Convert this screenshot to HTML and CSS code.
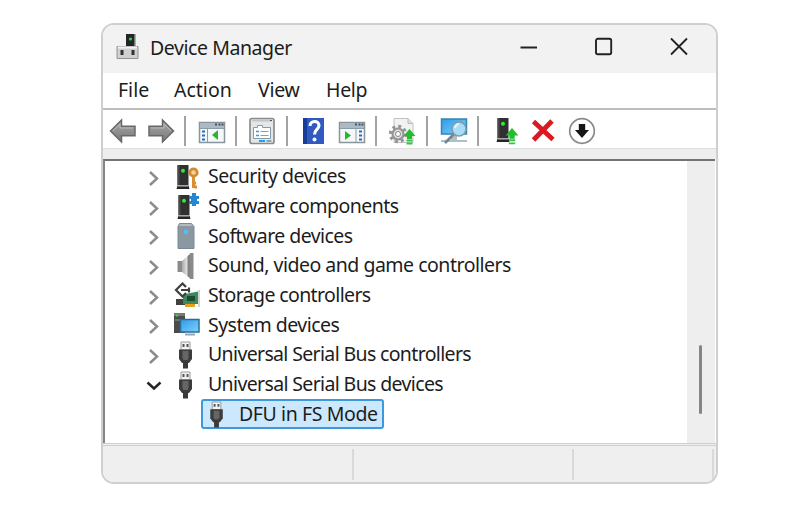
FILE: index.html
```html
<!DOCTYPE html>
<html lang="en">
<head>
<meta charset="utf-8">
<title>Device Manager</title>
<link rel="stylesheet" href="styles.css">
</head>
<body>
<svg class="defs" width="0" height="0">
  <defs>
    <linearGradient id="steel" x1="0" y1="0" x2="0" y2="1"><stop offset="0" stop-color="#a9a9a9"/><stop offset="1" stop-color="#777"/></linearGradient>
    <linearGradient id="screen" x1="0" y1="0" x2="1" y2="1"><stop offset="0" stop-color="#2f9be8"/><stop offset="1" stop-color="#7fd0fb"/></linearGradient>
    <linearGradient id="cone" x1="0" y1="0" x2="1" y2="0"><stop offset="0" stop-color="#aaa"/><stop offset=".5" stop-color="#ddd"/><stop offset=".75" stop-color="#777"/><stop offset="1" stop-color="#999"/></linearGradient>
    <symbol id="chevron" viewBox="0 0 16 18"><path d="M4 3 11 9.500l-7 6.500" fill="none" stroke="#8c8c8c" stroke-width="2.500"/></symbol>
    <symbol id="chevron-down" viewBox="0 0 16 18"><path d="M1.500 5.500 8 11.500 14.500 5.500" fill="none" stroke="#262626" stroke-width="2.500"/></symbol>
    <symbol id="tower" viewBox="0 0 14 25"><path d="M1.500 .5h11v20h-11z" fill="#303030"/><path d="M1.500 .5h2v20h-2z" fill="#4b4b4b"/><path d="M1.500 21h11l1 3.500H.5z" fill="#242424"/><path d="M2 21.500h10" stroke="#bbb"/><circle cx="7" cy="6.300" r="2" fill="#2bed38"/></symbol>
    <symbol id="usb" viewBox="0 0 28 28"><path d="M9 1h9v8H9z" fill="#f2f2f2" stroke="#9a9a9a"/><path d="M10.500 3h2v3h-2zm4 0h2v3h-2z" fill="#555"/><path d="M7 8.500h13V18l-3 4h-7l-3-4z" fill="#3c3c3c"/><path d="M10.500 10h6v7l-1 2h-4l-1-2z" fill="#666"/><path d="M11 21h5v6.500h-5z" fill="#393939"/></symbol>
    <symbol id="arrow" viewBox="0 0 28 28"><path d="M1.500 14 12.500 3v6.200H26v9.600H12.500V25z" fill="url(#steel)" stroke="#686868" stroke-width="1.500"/><path d="M4 14 11 7v4h13" fill="none" stroke="#b8b8b8"/></symbol>
    <symbol id="up" viewBox="0 0 12 16"><path d="M6 0l6 7H8.500v3h-5V7H0z" fill="#20bd2d"/><path d="M3 11.500h6m-6 3h6" stroke="#35c741" stroke-width="1.800"/></symbol>
  </defs>
</svg>
<main class="window">
  <header class="titlebar">
    <svg class="app-icon" viewBox="0 0 24 27"><path d="M10 0h8.500v13H10z" fill="#252525"/><path d="M18.500 0h1v13h-1z" fill="#666"/><circle cx="14.500" cy="5" r="1.600" fill="#28db35"/><path d="M1 12.500h21v12H1z" fill="#d0d0d0" stroke="#929292"/><path d="M2 13.500h19" stroke="#f4f4f4" stroke-width="2"/><path d="M4.500 16h3v5h-3zm11 0h3v5h-3z" fill="#333"/></svg>
    <h1>Device Manager</h1>
    <div class="controls">
      <svg viewBox="0 0 20 20"><path d="M1.500 10.500h16.500" stroke="#222" stroke-width="1.800"/></svg>
      <svg viewBox="0 0 20 20"><rect x="2" y="1.800" width="15.200" height="15.400" rx="1.800" fill="none" stroke="#222" stroke-width="1.900"/></svg>
      <svg viewBox="0 0 20 20"><path d="M2 1.500l16 16M18 1.500 2 17.500" stroke="#222" stroke-width="1.800"/></svg>
    </div>
  </header>
  <nav class="menu"><span class="file">File</span><span class="action">Action</span><span class="view">View</span><span class="help">Help</span></nav>
  <div class="toolbar">
    <svg class="tool back" viewBox="0 0 28 28"><use href="#arrow"/></svg>
    <svg class="tool forward" viewBox="0 0 28 28"><use href="#arrow" transform="translate(28 0) scale(-1 1)"/></svg>
    <i class="sep s1"></i>
    <svg class="tool tree-view" viewBox="0 0 28 28"><path d="M1.500 5.500h25v20h-25z" fill="#f5f7f8" stroke="#8a949b" stroke-width="1.500"/><path d="M2 6h24v5H2z" fill="#abb9c4"/><path d="M17 7.500h2m1.500 0h2m1 0h2" stroke="#40566b" stroke-width="2"/><path d="M2 11.500h24M9.500 12v13" stroke="#899da9"/><path d="M4 14.500h3m-3 4h3m-3 4h3" stroke="#286bc0" stroke-width="2"/><path d="M20 13v10l-6-5z" fill="#25b82c"/></svg>
    <i class="sep s2"></i>
    <svg class="tool properties" viewBox="0 0 28 28"><rect x="2" y="1.500" width="24" height="25" rx="2" fill="#e3e7ea" stroke="#8c8c8c" stroke-width="1.700"/><path d="M4 3.500h20" stroke="#bdc6cc" stroke-width="2"/><path d="M5.500 10.500h4v-2h5v2h8v11h-17z" fill="#fff" stroke="#849ca9"/><path d="M8 14.500h3m-3 4h3" stroke="#4594cb" stroke-width="1.600"/><path d="M12.500 14.500h8m-8 4h8" stroke="#8e9da5"/><path d="M11 24h6" stroke="#249df0" stroke-width="2"/><path d="M18.500 24h5" stroke="#8ba5b3" stroke-width="2"/><path d="M22 3.500h2" stroke="#555"/></svg>
    <i class="sep s3"></i>
    <svg class="tool help-icon" viewBox="0 0 28 28"><path d="M3 1h21v26H3z" fill="#3159bf"/><path d="M3 1h4v26H3z" fill="#173c99"/><path d="M10 9c0-6 9-6 9-.5 0 4-4.500 4-4.500 9" fill="none" stroke="#fff" stroke-width="3.100"/><circle cx="14.500" cy="22.500" r="2" fill="#fff"/></svg>
    <svg class="tool action-view" viewBox="0 0 28 28"><path d="M1.500 5.500h25v20h-25z" fill="#f5f7f8" stroke="#8a949b" stroke-width="1.500"/><path d="M2 6h24v5H2z" fill="#abb9c4"/><path d="M17 7.500h2m1.500 0h2m1 0h2" stroke="#40566b" stroke-width="2"/><path d="M2 11.500h24M18 12v13" stroke="#899da9"/><path d="M21 14.500h3m-3 4h3m-3 4h3" stroke="#286bc0" stroke-width="2"/><path d="M7 14v9l6-4.500z" fill="#25b82c"/></svg>
    <i class="sep s4"></i>
    <svg class="tool update" viewBox="0 0 28 28"><path d="M6 1.500h14l5 5v19H6z" fill="#f2f2f2" stroke="#c2c2c2"/><path d="M20 1.500v5h5" fill="#ddd" stroke="#bbb"/><circle cx="10" cy="17" r="5.500" fill="#e1e1e1" stroke="#959595" stroke-width="2.200"/><circle cx="10" cy="17" r="7.700" fill="none" stroke="#959595" stroke-width="3" stroke-dasharray="3 3.048"/><circle cx="10" cy="17" r="2.500" fill="#fff" stroke="#888"/><use href="#up" x="15" y="12" width="13" height="16"/></svg>
    <i class="sep s5"></i>
    <svg class="tool scan" viewBox="0 0 28 28"><path d="M1.500 2h25v15h-25z" fill="url(#screen)" stroke="#3a83ae" stroke-width="1.500"/><path d="M11 18h6v5h-6z" fill="#b6bec3"/><path d="M1 24h26" stroke="#abc0ca" stroke-width="2"/><path d="M14 17 5 26" stroke="#718594" stroke-width="2.700"/><circle cx="19" cy="12" r="7" fill="#a8dcf9" stroke="#7d9cac" stroke-width="1.600"/><path d="M15 11q1-4 4-4" fill="none" stroke="#e4f7ff" stroke-width="2"/></svg>
    <i class="sep s6"></i>
    <svg class="tool add" viewBox="0 0 28 28"><use href="#tower" x="2" y="0" width="14" height="26"/><use href="#up" x="11" y="11" width="14" height="17"/></svg>
    <svg class="tool remove" viewBox="0 0 28 28"><path d="M4.500 4.500 24 22.500M23 4 4.500 23" stroke="#dc1822" stroke-width="4.800"/></svg>
    <svg class="tool disable" viewBox="0 0 28 28"><circle cx="14" cy="14" r="12.300" fill="#fff" stroke="#8a8a8a" stroke-width="1.700"/><path d="M10.800 7h6.400v6H21l-7 8-7-8h3.800z" fill="#161616"/></svg>
  </div>
  <div class="band"></div>
  <section class="viewport">
    <ul class="tree">
      <li><svg class="chev"><use href="#chevron"/></svg><svg class="icon" viewBox="0 0 28 28"><use href="#tower" x="4" y="1" width="14" height="26"/><circle cx="21.500" cy="9.500" r="3.700" fill="#f7d49b" stroke="#d38a2b" stroke-width="2.800"/><path d="M21.500 14v11m1-1h2.500M22 20h2" stroke="#d8902f" stroke-width="3"/></svg><span class="r1">Security devices</span></li>
      <li><svg class="chev"><use href="#chevron"/></svg><svg class="icon" viewBox="0 0 28 28"><use href="#tower" x="5" y="1" width="14" height="26"/><path d="M17 3h3V0h4v3h3v3h-2v2h2v3h-3v2h-4v-2h-3V8h2V6h-2z" fill="#2587cf"/></svg><span class="r2">Software components</span></li>
      <li><svg class="chev"><use href="#chevron"/></svg><svg class="icon" viewBox="0 0 28 28"><path d="M7.500 1.500h12l2.500 3v22H6v-22z" fill="#8b98a1" stroke="#7c8992"/><path d="M8 2h11l2 2H7z" fill="#b2bbc1"/><circle cx="14" cy="10" r="2.200" fill="#4cc3ff"/></svg><span class="r3">Software devices</span></li>
      <li><svg class="chev"><use href="#chevron"/></svg><svg class="icon" viewBox="0 0 28 28"><path d="M5.500 9h5v11h-5z" fill="#8b8b8b"/><path d="M10 9 19 1v26l-9-7z" fill="url(#cone)"/><path d="M18 1h3.500v26H18z" fill="#8a8a8a"/></svg><span class="r4">Sound, video and game controllers</span></li>
      <li><svg class="chev"><use href="#chevron"/></svg><svg class="icon" viewBox="0 0 28 28"><path d="M4 17h10v6H4z" fill="#414141"/><path d="M11 12.500l15-3V22H11z" fill="#398a58"/><path d="M15 14h8v5h-8z" fill="#204931"/><path d="M27 8v17" stroke="#aaa"/><path d="M13 22h10v3H13z" fill="#e7a120"/><path d="M14 5 10.500 1.500 4 8l6.500 6.500L14 11M9 8h8m0-2.500v5" fill="none" stroke="#3f3f3f" stroke-width="2.200"/></svg><span class="r5">Storage controllers</span></li>
      <li><svg class="chev"><use href="#chevron"/></svg><svg class="icon" viewBox="0 0 28 28"><path d="M2 2h11v20H2z" fill="#4b4b4b"/><path d="M2 2h11v3H2z" fill="#777"/><path d="M3 9h8" stroke="#999"/><circle cx="5" cy="4.500" r="1.200" fill="#25df38"/><path d="M8.500 8.500h18.500v12.500h-18.500z" fill="url(#screen)" stroke="#2c6d97" stroke-width="1.500"/><path d="M13 23.500h10" stroke="#95a8b4" stroke-width="2"/></svg><span class="r6">System devices</span></li>
      <li><svg class="chev"><use href="#chevron"/></svg><svg class="icon"><use href="#usb"/></svg><span class="r7">Universal Serial Bus controllers</span></li>
      <li><svg class="chev"><use href="#chevron-down"/></svg><svg class="icon"><use href="#usb"/></svg><span class="r8">Universal Serial Bus devices</span></li>
      <li class="child"><div class="selected"><svg class="icon"><use href="#usb"/></svg><span class="r9">DFU in FS Mode</span></div></li>
    </ul>
    <div class="scrollbar"><div class="thumb"></div></div>
  </section>
  <footer class="status"><span></span><span></span><span></span></footer>
</main>
</body>
</html>
```
FILE: styles.css
```css
* { box-sizing: border-box; }
body { margin: 0; padding: 23px 0 0 101px; background: #fff; color: #1c1c1c; font: 19.5px/28px "Noto Sans", sans-serif; }
.defs { display: block; position: absolute; }
svg { display: block; flex: none; }
.window { width: 617px; height: 461px; overflow: hidden; display: flex; flex-direction: column; border: 2px solid #cfcfcf; border-radius: 13px; background: #fff; }
.titlebar { height: 48px; flex: none; display: flex; align-items: center; padding-left: 13px; background: #f2f2f2; }
.app-icon { width: 24px; height: 27px; margin-top: -3px; }
h1 { margin: -2px 0 0 10px; font: inherit; width: 369px; white-space: nowrap; letter-spacing: -0.43px; }
.controls { display: flex; gap: 55px; margin-top: -5px; }
.controls svg { width: 20px; height: 20px; }
.menu { height: 37px; flex: none; display: flex; padding: 3px 0 0 15px; border-bottom: 2px solid #bdbdbd; }
.menu .file { width: 56px; } .menu .action { width: 84px; } .menu .view { width: 68px; letter-spacing: -0.3px; } .menu .help { letter-spacing: -0.3px; }
.toolbar { height: 38px; flex: none; display: flex; align-items: center; padding: 4px 0 0 6px; }
.tool { width: 28px; height: 28px; }
.sep { width: 2px; height: 30px; background: #a3a3a3; flex: none; }
.forward { margin-left: 10px; }
.s1 { margin-left: 9px; } .tree-view { margin-left: 12px; } .s2 { margin-left: 9px; }
.properties { margin-left: 11px; } .s3 { margin-left: 10px; } .help-icon { margin-left: 12px; }
.action-view { margin-left: 10px; } .s4 { margin-left: 9px; } .update { margin-left: 11px; }
.s5 { margin-left: 10px; } .scan { margin-left: 12px; } .s6 { margin-left: 9px; }
.add { margin-left: 15px; } .remove { margin-left: 7px; } .disable { margin-left: 11px; }
.band { height: 11px; flex: none; background: #eee; border-top: 1px solid #dedede; }
.viewport { height: 284px; flex: none; display: flex; justify-content: space-between; border-top: 2px solid #737373; border-left: 2px solid #858585; margin-right: 1px; }
.tree { list-style: none; margin: 0; padding: 1px 0 0 41px; }
.tree li { display: flex; align-items: center; height: 29.7px; white-space: nowrap; }
.chev { width: 16px; height: 18px; margin-right: 10px; margin-top: 2px; }
.icon { width: 28px; height: 28px; }
.tree li > span { margin: -1px 0 0 8px; }
.r1 { letter-spacing: -0.47px; }
.r2 { letter-spacing: -0.55px; }
.r3 { letter-spacing: -0.56px; }
.r4 { letter-spacing: -0.49px; }
.r5 { letter-spacing: -0.62px; }
.r6 { letter-spacing: -0.52px; }
.r7 { letter-spacing: -0.65px; }
.r8 { letter-spacing: -0.64px; }
.r9 { letter-spacing: -0.4px; }
.child { padding-left: 55px; }
.selected { display: flex; align-items: center; width: 183px; height: 30px; border: 2px solid #3e98dc; border-radius: 3px; background: #cce8ff; }
.selected .icon { height: 27px; }
.selected span { margin: -1px 0 0 8px; }
.scrollbar { width: 28px; background: #eee; padding: 184px 0 0 12px; }
.thumb { width: 3px; height: 69px; background: #858585; border-radius: 2px; }
.status { flex: 1; display: flex; background: #efefef; border-top: 3px double #cfcfcf; padding: 3px 1px 2px 0; }
.status span { border-right: 2px solid #d9d9d9; width: 251px; }
.status span:nth-child(2) { width: 220px; }
.status span:nth-child(3) { width: 140px; }
```
